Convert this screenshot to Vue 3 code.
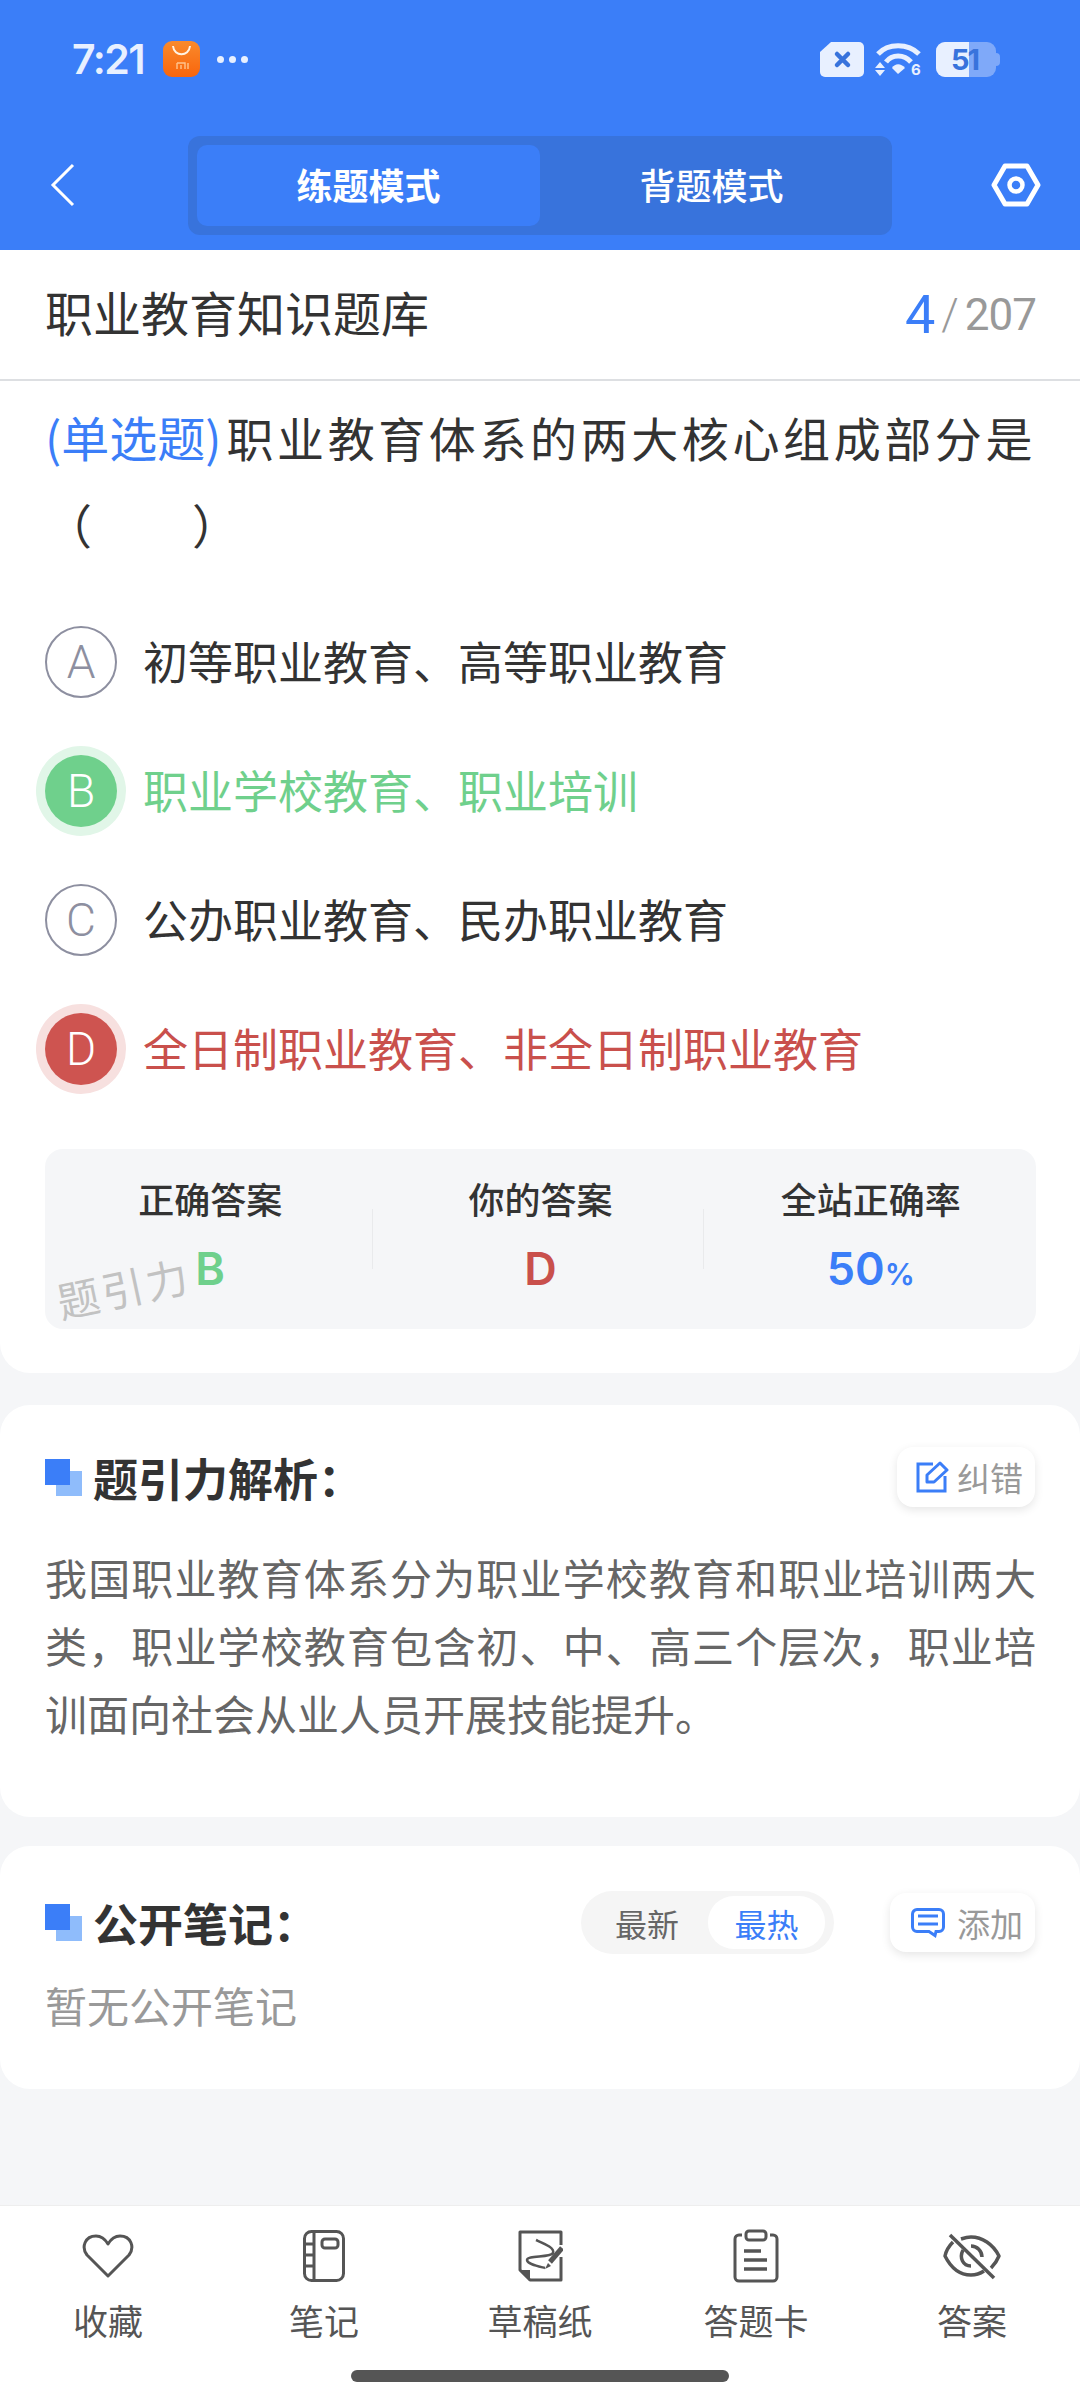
<template>
  <div class="page">
    <header class="top">
      <div class="status">
        <span class="time">7:21</span>
        <svg class="app-icon" width="37" height="36" viewBox="0 0 37 36">
          <defs>
            <linearGradient id="mi" x1="0" y1="0" x2="0" y2="1">
              <stop offset="0" stop-color="#f98a2c" />
              <stop offset="1" stop-color="#f9650c" />
            </linearGradient>
          </defs>
          <rect width="37" height="36" rx="9" fill="url(#mi)" />
          <path d="M10 5C11 16 26 16 27 5" fill="none" stroke="#fff3e4" stroke-width="2" />
          <path d="M14 22h8v6M14 22v6M18 24v4M25 22v6" fill="none" stroke="#ffc48e" stroke-width="1.4" />
        </svg>
        <span class="dots"><i></i><i></i><i></i></span>
        <span class="status-right">
          <svg width="44" height="35" viewBox="0 0 44 35">
            <path d="M11 0h28a5 5 0 0 1 5 5v25a5 5 0 0 1-5 5H5a5 5 0 0 1-5-5V10z" fill="#e8f0ff" />
            <path d="M17 12l11 11M28 12L17 23" stroke="#3873dc" stroke-width="4.5" stroke-linecap="round" />
          </svg>
          <svg class="wifi" width="48" height="42" viewBox="0 0 48 42">
            <path d="M3 13C13 2 33 2 44 13" fill="none" stroke="#e8f0ff" stroke-width="5" />
            <path d="M11 21C17 13 29 13 36 21" fill="none" stroke="#e8f0ff" stroke-width="5" />
            <path d="M17 27C20 22 26 22 30 27L23 33z" fill="#e8f0ff" />
            <path d="M5 21l5 6H0zM0 29h10l-5 6z" fill="#e8f0ff" />
            <text x="36" y="34" class="wifi-six">6</text>
          </svg>
          <span class="battery">
            <span class="battery-fill"></span>
            <span class="battery-num">51</span>
            <span class="battery-tip"></span>
          </span>
        </span>
      </div>
      <nav class="nav">
        <svg class="back" width="26" height="44" viewBox="0 0 26 44">
          <path d="M23 2L3 22l20 20" fill="none" stroke="#fff" stroke-width="3" />
        </svg>
        <div class="mode">
          <span class="mode-tab active">练题模式</span>
          <span class="mode-tab">背题模式</span>
        </div>
        <svg class="gear" width="50" height="44" viewBox="0 0 50 44">
          <path d="M14 3h22l11 19-11 19H14L3 22z" fill="none" stroke="#fff" stroke-width="5" stroke-linejoin="round" />
          <circle cx="25" cy="22" r="6.5" fill="none" stroke="#fff" stroke-width="4.5" />
        </svg>
      </nav>
    </header>

    <section class="card first">
      <div class="title-row">
        <span class="bank">职业教育知识题库</span>
        <span class="count"><b>4</b><em>/</em>207</span>
      </div>
      <div class="body">
        <p class="question"><span class="q-type">(单选题)</span>职业教育体系的两大核心组成部分是<br /><span class="blank">（<span class="gap"></span>）</span></p>
        <div v-for="o in options" :key="o.key" class="option" :class="o.state">
          <span class="letter">{{ o.key }}</span>
          <span class="o-text">{{ o.text }}</span>
        </div>
        <div class="stats">
          <div class="stat">
            <span class="stat-label">正确答案</span>
            <span class="stat-value green">B</span>
          </div>
          <div class="stat">
            <span class="stat-label">你的答案</span>
            <span class="stat-value red">D</span>
          </div>
          <div class="stat">
            <span class="stat-label">全站正确率</span>
            <span class="stat-value blue">50<small>%</small></span>
          </div>
          <span class="mark">题引力</span>
        </div>
      </div>
    </section>

    <section class="card analysis">
      <div class="head">
        <span class="squares"></span>
        <h2>题引力解析：</h2>
        <span class="chip">
          <svg width="33" height="32" viewBox="0 0 33 32">
            <path d="M17 3H2v27h27V15" fill="none" stroke="#3b7ef8" stroke-width="3" />
            <path d="M11 21v-7L24 2l7 7-13 12z" fill="none" stroke="#3b7ef8" stroke-width="3" stroke-linejoin="round" />
          </svg>
          纠错
        </span>
      </div>
      <p class="explain">我国职业教育体系分为职业学校教育和职业培训两大类，职业学校教育包含初、中、高三个层次，职业培训面向社会从业人员开展技能提升。</p>
    </section>

    <section class="card notes">
      <div class="head">
        <span class="squares"></span>
        <h2>公开笔记：</h2>
        <span class="sort">
          <span class="off">最新</span>
          <span class="on">最热</span>
        </span>
        <span class="chip add">
          <svg width="34" height="30" viewBox="0 0 34 30">
            <path d="M6 1.5h22a4.500 4.500 0 0 1 4.500 4.500v13a4.500 4.500 0 0 1-4.500 4.500h-3l-1 4-6-4H6A4.500 4.500 0 0 1 1.500 19V6A4.500 4.500 0 0 1 6 1.500z" fill="none" stroke="#3b7ef8" stroke-width="3" />
            <path d="M7 8h20M7 16h20" stroke="#3b7ef8" stroke-width="3" />
          </svg>
          添加
        </span>
      </div>
      <p class="empty">暂无公开笔记</p>
    </section>

    <footer class="tabbar">
      <div class="tools">
        <div class="tool">
          <svg width="52" height="46" viewBox="0 0 52 46">
            <path d="M26 43L5 22C-1 14 3 3 14 3c5 0 9 3 12 8 3-5 7-8 12-8 11 0 15 11 9 19z" fill="none" stroke="#555" stroke-width="3" stroke-linejoin="round" />
          </svg>
          <span>收藏</span>
        </div>
        <div class="tool">
          <svg width="42" height="52" viewBox="0 0 42 52">
            <rect x="1.500" y="1.500" width="39" height="49" rx="7" fill="none" stroke="#555" stroke-width="3" />
            <path d="M11 2v48M2 14h9M2 25h9M2 36h9" fill="none" stroke="#555" stroke-width="3" />
            <rect x="19" y="9" width="16" height="9" rx="3" fill="none" stroke="#555" stroke-width="3" />
          </svg>
          <span>笔记</span>
        </div>
        <div class="tool">
          <svg width="46" height="54" viewBox="0 0 46 54">
            <path d="M44 16V3H3V41L13 51H44V28" fill="none" stroke="#555" stroke-width="3" stroke-linejoin="round" />
            <path d="M3 41h10v10z" fill="#555" />
            <path d="M19 11C28 15 38 19 36 24 33 29 10 26 10 31 10 35 20 37 28 39" fill="none" stroke="#555" stroke-width="2.500" />
            <path d="M45 19L33 33" stroke="#555" stroke-width="5" />
            <path d="M31 34l-3 6 6-3z" fill="#555" />
          </svg>
          <span>草稿纸</span>
        </div>
        <div class="tool">
          <svg width="46" height="54" viewBox="0 0 46 54">
            <path d="M9 6H6a4 4 0 0 0-4 4v38a4 4 0 0 0 4 4h34a4 4 0 0 0 4-4V10a4 4 0 0 0-4-4h-3" fill="none" stroke="#555" stroke-width="3" />
            <rect x="13" y="2" width="20" height="9" rx="3" fill="none" stroke="#555" stroke-width="3" />
            <path d="M11 22h17M11 31h23M11 40h23" stroke="#555" stroke-width="3.500" />
          </svg>
          <span>答题卡</span>
        </div>
        <div class="tool">
          <svg width="58" height="46" viewBox="0 0 58 46">
            <path d="M10 9C6 13 3 18 2 23c6 12 15 19 26 19 5 0 10-2 13-4M18 6c3-1 7-2 10-2 11 0 22 7 28 19-2 5-5 9-8 12" fill="none" stroke="#555" stroke-width="3.500" stroke-linejoin="round" />
            <path d="M7 2l44 43" stroke="#555" stroke-width="3.500" />
            <path d="M20 17c-4 8 0 16 8 16" fill="none" stroke="#555" stroke-width="3.500" />
            <path d="M28 13c6 0 11 5 11 11" fill="none" stroke="#555" stroke-width="3.500" />
          </svg>
          <span>答案</span>
        </div>
      </div>
      <div class="home"></div>
    </footer>
  </div>
</template>

<script setup>
const options = [
  { key: 'A', text: '初等职业教育、高等职业教育', state: '' },
  { key: 'B', text: '职业学校教育、职业培训', state: 'right' },
  { key: 'C', text: '公办职业教育、民办职业教育', state: '' },
  { key: 'D', text: '全日制职业教育、非全日制职业教育', state: 'wrong' }
]
</script>

<style>
body {
  background: #f5f6f8;
}
</style>

<style scoped>
.page {
  width: 1080px;
  height: 2400px;
  display: flex;
  flex-direction: column;
  background: #f5f6f8;
  font-family: "Noto Sans CJK SC", "Noto Sans", sans-serif;
  color: #333;
  overflow: hidden;
}

.top {
  height: 250px;
  background: #3b7ef8;
  flex-shrink: 0;
}
.status {
  height: 118px;
  display: flex;
  align-items: center;
  padding: 0 80px 0 72px;
  box-sizing: border-box;
}
.time {
  font-family: Inter, sans-serif;
  font-size: 41px;
  font-weight: 600;
  letter-spacing: -1.5px;
  color: #e8f0ff;
  width: 91px;
}
.dots {
  display: flex;
  gap: 5px;
  margin-left: 17px;
}
.dots i {
  width: 7px;
  height: 7px;
  border-radius: 50%;
  background: #e8f0ff;
}
.status-right {
  margin-left: auto;
  display: flex;
  align-items: center;
  gap: 11px;
}
.wifi {
  margin-top: 6px;
}
.wifi-six {
  font-family: Inter, sans-serif;
  font-size: 15px;
  font-weight: 700;
  fill: #e8f0ff;
}
.battery {
  position: relative;
  width: 60px;
  height: 35px;
  margin: 0 4px 0 2px;
  border-radius: 9px;
  background: #7fa9f9;
}
.battery-fill {
  position: absolute;
  left: 0;
  top: 0;
  bottom: 0;
  width: 33px;
  background: #e8f0ff;
  border-radius: 9px 0 0 9px;
}
.battery-num {
  position: absolute;
  left: 15px;
  top: 0;
  line-height: 35px;
  font-family: Inter, sans-serif;
  font-size: 29px;
  font-weight: 700;
  letter-spacing: -2px;
  color: #3873dc;
}
.battery-tip {
  position: absolute;
  right: -4px;
  top: 11px;
  width: 4px;
  height: 13px;
  background: #7fa9f9;
  border-radius: 0 4px 4px 0;
}

.nav {
  height: 132px;
  display: flex;
  align-items: flex-start;
  position: relative;
}
.back {
  margin: 45px 0 0 50px;
}
.mode {
  width: 704px;
  height: 99px;
  margin: 18px 0 0 112px;
  padding: 9px;
  box-sizing: border-box;
  display: flex;
  background: #3873dc;
  border-radius: 12px;
}
.mode-tab {
  flex: 1;
  display: flex;
  align-items: center;
  justify-content: center;
  padding-bottom: 4px;
  font-size: 36px;
  font-weight: 500;
  color: #fff;
  border-radius: 10px;
}
.mode-tab.active {
  background: #3b7ef8;
  font-weight: 700;
}
.gear {
  margin: 45px 0 0 99px;
}

.card {
  background: #fff;
  border-radius: 30px;
  flex-shrink: 0;
}
.first {
  height: 1123px;
  border-radius: 0 0 30px 30px;
}
.title-row {
  height: 131px;
  display: flex;
  align-items: center;
  justify-content: space-between;
  padding: 0 44px 7px 45px;
  box-sizing: border-box;
  border-bottom: 2px solid #dddfe2;
}
.bank {
  font-size: 48px;
  color: #333;
}
.count {
  margin-top: 7px;
  font-family: Roboto, sans-serif;
  font-size: 44px;
  letter-spacing: -1px;
  color: #999;
  display: flex;
  align-items: center;
}
.count b {
  font-size: 54px;
  font-weight: 400;
  color: #3b7ef8;
}
.count em {
  font-style: normal;
  font-weight: 300;
  margin: 0 7px;
}
.body {
  padding: 12px 44px 0 45px;
}
.question {
  margin: 0;
  font-size: 47px;
  line-height: 87px;
  letter-spacing: 3.600px;
  color: #333;
  white-space: nowrap;
}
.q-type {
  color: #3b7ef8;
  font-size: 48px;
  letter-spacing: 0;
  margin-right: 5px;
}
.blank {
  letter-spacing: 0;
}
.gap {
  display: inline-block;
  width: 100px;
}
.option {
  height: 129px;
  display: flex;
  align-items: center;
  gap: 26px;
}
.question + .option {
  margin-top: 30px;
}
.letter {
  width: 72px;
  height: 72px;
  box-sizing: border-box;
  flex-shrink: 0;
  border: 2px solid #8d8fa0;
  border-radius: 50%;
  display: flex;
  align-items: center;
  justify-content: center;
  font-family: Roboto, sans-serif;
  font-size: 46px;
  font-weight: 300;
  color: #8d8fa0;
}
.o-text {
  font-size: 45px;
  padding-bottom: 3px;
  color: #333;
}
.right .letter,
.wrong .letter {
  color: #fff;
  border: 0;
}
.right .letter {
  background: #6fd08c;
  box-shadow: 0 0 0 9px #e1f6e8;
}
.wrong .letter {
  background: #ce5450;
  box-shadow: 0 0 0 9px #f7e0df;
}
.right .o-text {
  color: #6fd08c;
}
.wrong .o-text {
  color: #c9504c;
}

.stats {
  position: relative;
  margin-top: 36px;
  height: 180px;
  display: flex;
  align-items: stretch;
  background: #f5f6f8;
  border-radius: 18px;
  overflow: hidden;
}
.stat {
  flex: 1;
  display: flex;
  flex-direction: column;
  align-items: center;
  padding-top: 25px;
  box-sizing: border-box;
  position: relative;
}
.stat + .stat::before {
  content: "";
  position: absolute;
  left: -3px;
  top: 60px;
  height: 60px;
  width: 1px;
  background: #e9eaec;
}
.stat-label {
  font-size: 36px;
  font-weight: 500;
  line-height: 48px;
  color: #333;
}
.stat-value {
  font-family: Inter, sans-serif;
  font-size: 45px;
  font-weight: 600;
  line-height: 60px;
  margin-top: 17px;
}
.stat-value small {
  font-size: 30px;
}
.green {
  color: #6fd08c;
}
.red {
  color: #c9504c;
}
.blue {
  color: #3b7ef8;
}
.mark {
  position: absolute;
  left: 11px;
  top: 113px;
  font-size: 42px;
  line-height: 50px;
  letter-spacing: 3px;
  color: #c2c2c2;
  transform: rotate(-12deg);
}

.analysis {
  margin-top: 32px;
  height: 412px;
}
.notes {
  margin-top: 29px;
  height: 243px;
}
.head {
  display: flex;
  align-items: center;
  padding: 0 45px 0 45px;
}
.analysis .head {
  height: 132px;
  padding-top: 6px;
}
.notes .head {
  height: 77px;
  padding-top: 38px;
}
.squares {
  position: relative;
  width: 37px;
  height: 37px;
  flex-shrink: 0;
  background: linear-gradient(#8fbcfb, #8fbcfb) 11px 12px / 26px 25px no-repeat;
}
.squares::before {
  content: "";
  position: absolute;
  left: 0;
  top: 0;
  width: 25px;
  height: 26px;
  background: #3b7ef8;
}
.head h2 {
  margin: 0 0 0 11px;
  font-size: 45px;
  font-weight: 700;
  color: #333;
}
.chip {
  margin-left: auto;
  width: 138px;
  height: 60px;
  padding-left: 19px;
  box-sizing: border-box;
  display: flex;
  align-items: center;
  gap: 8px;
  background: #fff;
  border-radius: 16px;
  box-shadow: 0 3px 10px rgba(0, 0, 0, 0.1);
  font-size: 33px;
  color: #999;
}
.explain {
  margin: 0;
  padding: 0 44px 0 45px;
  font-size: 42px;
  line-height: 68px;
  color: #666;
  text-align: justify;
}
.sort {
  margin-left: auto;
  width: 253px;
  height: 63px;
  box-sizing: border-box;
  padding: 5px 9px 5px 5px;
  display: flex;
  background: #f5f5f5;
  border-radius: 32px;
  font-size: 32px;
  color: #666;
}
.sort span {
  display: flex;
  align-items: center;
  justify-content: center;
  border-radius: 26px;
}
.sort .off {
  width: 122px;
}
.sort .on {
  width: 117px;
  background: #fff;
  color: #3b7ef8;
}
.chip.add {
  margin-left: 56px;
  width: 145px;
  height: 59px;
  padding-left: 21px;
  gap: 12px;
}
.empty {
  margin: 0;
  padding: 14px 45px 0;
  font-size: 42px;
  line-height: 60px;
  color: #999;
}

.tabbar {
  margin-top: auto;
  height: 195px;
  background: #fff;
  border-top: 1px solid #eee;
  box-sizing: border-box;
  display: flex;
  flex-direction: column;
  align-items: center;
}
.tools {
  width: 100%;
  display: grid;
  grid-template-columns: repeat(5, 216px);
}
.tool {
  display: flex;
  flex-direction: column;
  align-items: center;
  height: 140px;
  padding-top: 23px;
  box-sizing: border-box;
  font-size: 35px;
  color: #555;
}
.tool svg {
  height: 54px;
}
.tool span {
  margin-top: 13px;
  line-height: 48px;
}
.home {
  margin-top: 24px;
  width: 378px;
  height: 12px;
  border-radius: 6px;
  background: #555;
}
</style>
